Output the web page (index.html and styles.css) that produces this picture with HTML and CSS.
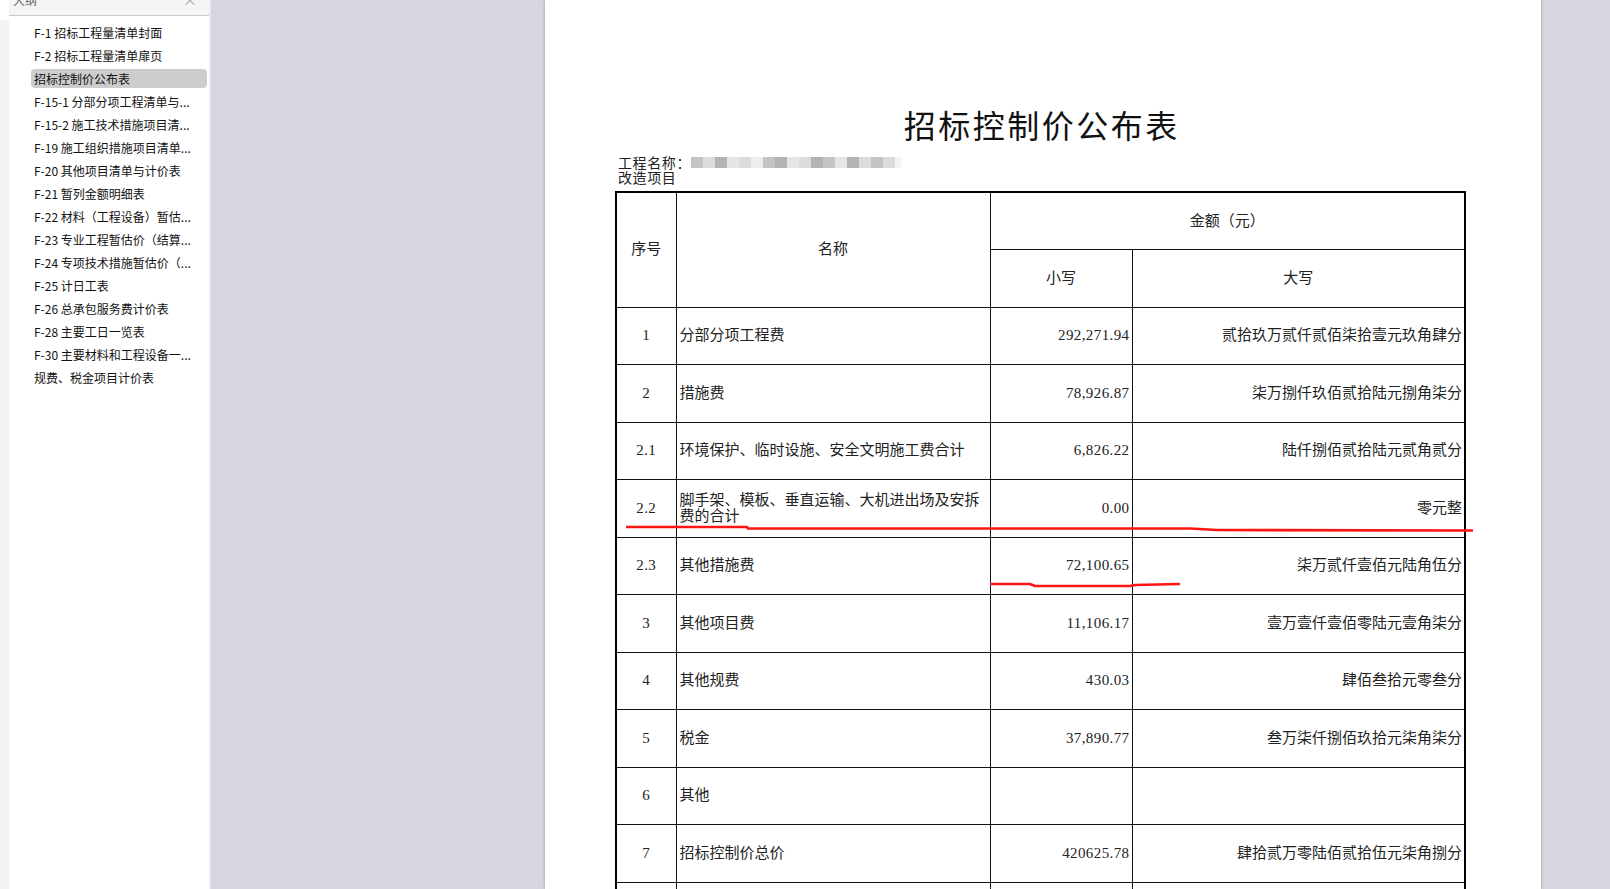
FILE: index.html
```html
<!DOCTYPE html>
<html lang="zh-CN">
<head>
<meta charset="utf-8">
<title>招标控制价公布表</title>
<link rel="stylesheet" href="styles.css">
</head>
<body>
<div class="app">
  <div class="edge"></div>
  <aside class="outline">
    <div class="outline-head"><span class="outline-title">大纲</span><span class="outline-close">×</span></div>
    <ul class="outline-list">
      <li class="item">F-1 招标工程量清单封面</li>
      <li class="item">F-2 招标工程量清单扉页</li>
      <li class="item active">招标控制价公布表</li>
      <li class="item">F-15-1 分部分项工程清单与...</li>
      <li class="item">F-15-2 施工技术措施项目清...</li>
      <li class="item">F-19 施工组织措施项目清单...</li>
      <li class="item">F-20 其他项目清单与计价表</li>
      <li class="item">F-21 暂列金额明细表</li>
      <li class="item">F-22 材料（工程设备）暂估...</li>
      <li class="item">F-23 专业工程暂估价（结算...</li>
      <li class="item">F-24 专项技术措施暂估价（...</li>
      <li class="item">F-25 计日工表</li>
      <li class="item">F-26 总承包服务费计价表</li>
      <li class="item">F-28 主要工日一览表</li>
      <li class="item">F-30 主要材料和工程设备一...</li>
      <li class="item">规费、税金项目计价表</li>
    </ul>
  </aside>
  <main class="viewer">
    <div class="page">
      <h1 class="doc-title">招标控制价公布表</h1>
      <div class="project">
        <div class="project-line">工程名称：<span class="redact"><i class="r1"></i><i class="r2"></i><i class="r3"></i><i class="r4"></i><i class="r2"></i><i class="r5"></i><i class="r1"></i><i class="r3"></i><i class="r4"></i><i class="r2"></i><i class="r3"></i><i class="r1"></i><i class="r4"></i><i class="r3"></i><i class="r2"></i><i class="r1"></i><i class="r2"></i><i class="r6"></i></span></div>
        <div>改造项目</div>
      </div>
      <table class="sheet">
        <colgroup>
          <col class="c-no"><col class="c-name"><col class="c-small"><col class="c-big">
        </colgroup>
        <tr>
          <td rowspan="2" class="center">序号</td>
          <td rowspan="2" class="center">名称</td>
          <td colspan="2" class="center">金额（元）</td>
        </tr>
        <tr>
          <td class="center">小写</td>
          <td class="center">大写</td>
        </tr>
        <tr><td class="center num">1</td><td class="name">分部分项工程费</td><td class="num right">292,271.94</td><td class="right">贰拾玖万贰仟贰佰柒拾壹元玖角肆分</td></tr>
        <tr><td class="center num">2</td><td class="name">措施费</td><td class="num right">78,926.87</td><td class="right">柒万捌仟玖佰贰拾陆元捌角柒分</td></tr>
        <tr><td class="center num">2.1</td><td class="name">环境保护、临时设施、安全文明施工费合计</td><td class="num right">6,826.22</td><td class="right">陆仟捌佰贰拾陆元贰角贰分</td></tr>
        <tr><td class="center num">2.2</td><td class="name two">脚手架、模板、垂直运输、大机进出场及安拆费的合计</td><td class="num right">0.00</td><td class="right">零元整</td></tr>
        <tr><td class="center num">2.3</td><td class="name">其他措施费</td><td class="num right">72,100.65</td><td class="right">柒万贰仟壹佰元陆角伍分</td></tr>
        <tr><td class="center num">3</td><td class="name">其他项目费</td><td class="num right">11,106.17</td><td class="right">壹万壹仟壹佰零陆元壹角柒分</td></tr>
        <tr><td class="center num">4</td><td class="name">其他规费</td><td class="num right">430.03</td><td class="right">肆佰叁拾元零叁分</td></tr>
        <tr><td class="center num">5</td><td class="name">税金</td><td class="num right">37,890.77</td><td class="right">叁万柒仟捌佰玖拾元柒角柒分</td></tr>
        <tr><td class="center num">6</td><td class="name">其他</td><td class="num right"></td><td class="right"></td></tr>
        <tr><td class="center num">7</td><td class="name">招标控制价总价</td><td class="num right">420625.78</td><td class="right">肆拾贰万零陆佰贰拾伍元柒角捌分</td></tr>
        <tr><td></td><td></td><td></td><td></td></tr>
      </table>
      <svg class="marks" width="996" height="889" viewBox="0 0 996 889">
        <polyline points="81,527 202,527 203,528.5 645,528.5 672,530 928,530.5" />
        <polyline points="445,584 485,584 490,586 585,586 590,585 635,584" />
      </svg>
    </div>
  </main>
</div>
</body>
</html>
```

FILE: styles.css
```css
body {
  margin: 0;
  width: 1610px;
  height: 889px;
  overflow: hidden;
  font-family: "Noto Sans CJK SC", sans-serif;
}

.app {
  display: flex;
  height: 889px;
}

.edge {
  width: 9px;
  flex: none;
  background: linear-gradient(#ffffff 0 20px, #f2f2f2 20px);
}

.outline {
  width: 200px;
  flex: none;
  background: #ffffff;
  border-right: 2px solid #ececf0;
}

.outline-head {
  height: 15px;
  background: #f5f5f5;
  border-bottom: 1px solid #c8c8c8;
  display: flex;
  justify-content: space-between;
  overflow: hidden;
  padding: 0 12px 0 4px;
}

.outline-title {
  font-size: 12px;
  line-height: 12px;
  margin-top: -6px;
  color: #666;
}

.outline-close {
  font-size: 14px;
  line-height: 12px;
  margin-top: -7px;
  color: #aaa;
}

.outline-list {
  list-style: none;
  margin: 0;
  padding: 7px 0 0 0;
}

.item {
  height: 19px;
  line-height: 19px;
  margin: 0 2px 4px 22px;
  padding-left: 3px;
  font-size: 12px;
  color: #111;
  border-radius: 4px;
  white-space: nowrap;
  overflow: hidden;
}

.item.active {
  background: #cdcdcd;
}

.viewer {
  flex: 1;
  background: #d6d6e0;
  padding-left: 334px;
}

.page {
  position: relative;
  width: 996px;
  height: 889px;
  background: #ffffff;
  box-shadow: 0 0 3px rgba(0, 0, 0, 0.3);
  padding: 104px 0 0 70px;
  box-sizing: border-box;
}

.doc-title {
  margin: 0;
  width: 851px;
  text-align: center;
  font-size: 32px;
  line-height: 40px;
  font-weight: 400;
  letter-spacing: 2.5px;
  text-indent: 2.5px;
  color: #111;
}

.project {
  margin-top: 10.5px;
  padding-left: 3px;
  font-size: 14px;
  line-height: 15px;
  letter-spacing: 0.6px;
  color: #222;
}

.project-line {
  display: flex;
  align-items: center;
}

.redact {
  display: inline-flex;
  height: 11px;
  filter: blur(0.5px);
}

.redact i {
  display: block;
  width: 12px;
  height: 11px;
}

.redact .r1 { background: #c4c4c4; }
.redact .r2 { background: #dcdcdc; }
.redact .r3 { background: #b3b3b3; }
.redact .r4 { background: #e6e6e6; }
.redact .r5 { background: #ededed; }
.redact .r6 { background: #f3f3f3; width: 6px; }

.sheet {
  margin-top: 6.5px;
  width: 851px;
  table-layout: fixed;
  border-collapse: collapse;
  border: 2px solid #000;
  font-family: "Liberation Serif", "Noto Sans CJK SC", serif;
  font-size: 15px;
  line-height: 15px;
  color: #222;
}

.c-no { width: 60px; }
.c-name { width: 314px; }
.c-small { width: 142px; }
.c-big { width: 333px; }

.sheet tr {
  height: 57.5px;
}

.sheet td {
  border: 1px solid #111;
  padding: 0 2px 0 3px;
  vertical-align: middle;
  overflow: hidden;
}

.sheet .center {
  text-align: center;
  padding: 0;
}

.sheet .right {
  text-align: right;
  padding-right: 2px;
}

.sheet .num {
  letter-spacing: 0.4px;
}

.sheet .name {
  padding-left: 3px;
  padding-right: 4px;
}

.sheet .name.two {
  line-height: 16px;
}

.marks {
  position: absolute;
  left: 0;
  top: 0;
  pointer-events: none;
}

.marks polyline {
  fill: none;
  stroke: #ff1414;
  stroke-width: 2.6;
  stroke-linejoin: round;
}
```
